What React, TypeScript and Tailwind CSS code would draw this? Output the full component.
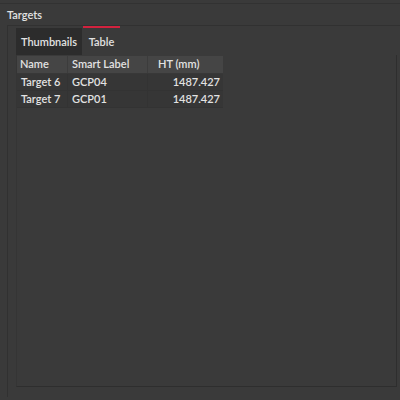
import React from 'react';

const rows = [
  { name: 'Target 6', label: 'GCP04', ht: '1487.427' },
  { name: 'Target 7', label: 'GCP01', ht: '1487.427' },
];

export default function App() {
  return (
    <div
      className="w-[400px] h-[400px] overflow-hidden bg-[#3a3a3a] text-[#e2e2e2] text-[11px] font-semibold flex flex-col"
      style={{ fontFamily: 'Lato, "Noto Sans", sans-serif' }}
    >
      <div className="h-[3px]" />
      <div className="border-t border-[#323232] h-[22px] pl-[7px] flex items-center">
        <span className="leading-none">Targets</span>
      </div>
      <div className="flex-1 ml-[7px] mb-[3px] border-t border-l border-[#313131] pl-[8px] pr-[3px] flex flex-col">
        {/* tabs */}
        <div className="h-[29px] flex items-end">
          <div className="h-[27px] w-[66px] pt-[1px] bg-[#2c2c2c] flex items-center justify-center">Thumbnails</div>
          <div className="h-[29px] w-[39px] flex flex-col">
            <div className="h-[2px] mx-[1px] bg-[#d2223e]" />
            <div className="flex-1 pt-[1px] flex items-center justify-center">Table</div>
          </div>
        </div>
        {/* content panel */}
        <div className="flex-1 mb-[10px] bg-[#3a3a3a] border-r border-b border-[#2e2e2e] border-l border-l-[#353535]">
          <div className="w-[206px] pt-[1px]">
            <div className="flex h-[18px] bg-[#454545] border-b border-[#383838]">
              <div className="w-[51px] pl-[3px] flex items-center border-r border-[#3c3c3c]">Name</div>
              <div className="w-[80px] pl-[4px] flex items-center border-r border-[#3c3c3c]">Smart Label</div>
              <div className="w-[75px] pl-[10px] flex items-center">HT (mm)</div>
            </div>
            {rows.map((r) => (
              <div key={r.name} className="flex h-[17px] bg-[#363636] border-b border-[#333333]">
                <div className="w-[51px] pl-[4px] flex items-center border-r border-[#333333]">{r.name}</div>
                <div className="w-[80px] pl-[4px] flex items-center border-r border-[#333333]">{r.label}</div>
                <div className="w-[75px] pr-[3px] flex items-center justify-end">{r.ht}</div>
              </div>
            ))}
          </div>
        </div>
      </div>
    </div>
  );
}
